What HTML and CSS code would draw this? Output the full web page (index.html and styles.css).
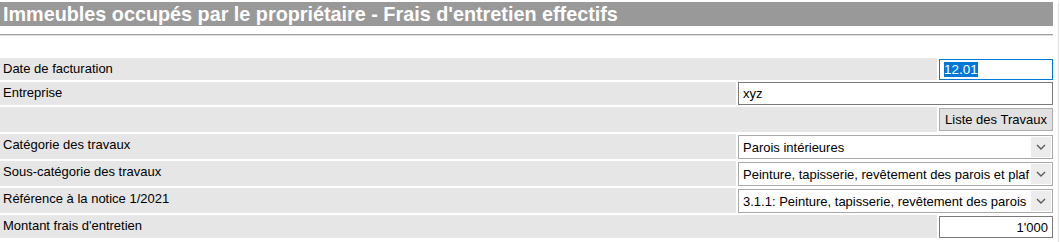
FILE: index.html
```html
<!DOCTYPE html>
<html>
<head>
    <title>Frais d'entretien effectifs</title>
    <link rel="stylesheet" href="styles.css">
</head>
<body>
  <div class="page">
    <h1 class="title">Immeubles occupés par le propriétaire - Frais d'entretien effectifs</h1>
    <div class="rule"></div>

    <form class="form">
      <div class="row row-date">
        <div class="label">Date de facturation</div>
        <div class="cell cell-short">
          <div class="field field-focus"><span class="sel">12.01</span></div>
        </div>
      </div>

      <div class="row row-text">
        <div class="label">Entreprise</div>
        <div class="cell cell-long">
          <input type="text" class="field" value="xyz">
        </div>
      </div>

      <div class="row row-tall">
        <div class="label"></div>
        <div class="cell cell-short">
          <button type="button" class="button">Liste des Travaux</button>
        </div>
      </div>

      <div class="row row-tall">
        <div class="label">Catégorie des travaux</div>
        <div class="cell cell-long">
          <div class="select">
            <span class="select-text">Parois intérieures</span>
            <span class="arrow"><svg width="10" height="6" viewBox="0 0 10 6"><path d="M1 1 L5 5 L9 1" fill="none" stroke="#5a5a5a" stroke-width="1.4"/></svg></span>
          </div>
        </div>
      </div>

      <div class="row row-tall">
        <div class="label">Sous-catégorie des travaux</div>
        <div class="cell cell-long">
          <div class="select">
            <span class="select-text">Peinture, tapisserie, revêtement des parois et plaf</span>
            <span class="arrow"><svg width="10" height="6" viewBox="0 0 10 6"><path d="M1 1 L5 5 L9 1" fill="none" stroke="#5a5a5a" stroke-width="1.4"/></svg></span>
          </div>
        </div>
      </div>

      <div class="row row-tall">
        <div class="label">Référence à la notice 1/2021</div>
        <div class="cell cell-long">
          <div class="select">
            <span class="select-text">3.1.1: Peinture, tapisserie, revêtement des parois</span>
            <span class="arrow"><svg width="10" height="6" viewBox="0 0 10 6"><path d="M1 1 L5 5 L9 1" fill="none" stroke="#5a5a5a" stroke-width="1.4"/></svg></span>
          </div>
        </div>
      </div>

      <div class="row row-amount">
        <div class="label">Montant frais d'entretien</div>
        <div class="cell cell-short">
          <input type="text" class="field field-number" value="1'000">
        </div>
      </div>
    </form>
  </div>
</body>
</html>
```

FILE: styles.css
```css
body {
    margin: 0;
    background-color: #fff;
    font-family: "Liberation Sans", Arial, sans-serif;
    font-size: 13px;
    color: #000;
}

.page {
    width: 1053px;
    min-height: 242px;
    padding-right: 5px;
    border-right: 1px solid #e2e2e2;
}

.title {
    margin: 2px 0 0 0;
    height: 24px;
    line-height: 24px;
    padding-left: 3px;
    background-color: #999999;
    color: #fff;
    font-size: 19.8px;
    font-weight: bold;
    white-space: nowrap;
}

.rule {
    margin-top: 8px;
    height: 1px;
    background-color: #a0a0a0;
    border-bottom: 1px solid #dedede;
}

.form {
    margin-top: 22px;
    display: flex;
    flex-direction: column;
    gap: 2px;
}

.row {
    display: flex;
}

.row-date { height: 22px; }
.row-text { height: 23px; }
.row-tall { height: 25px; }
.row-amount { height: 23px; }

.label {
    flex: 1;
    background-color: #e6e6e6;
    padding: 3px 0 0 3px;
    line-height: 15px;
}

.cell {
    display: flex;
    background-color: #fff;
    padding-left: 2px;
}

.cell-short { width: 114px; }
.cell-long { width: 315px; }

.field {
    box-sizing: border-box;
    width: 100%;
    height: 100%;
    margin: 0;
    border: 1px solid #7a7a7a;
    padding: 0 4px;
    font-family: "Liberation Sans", Arial, sans-serif;
    font-size: 13px;
    color: #000;
    background: #fff;
    outline: none;
}

.field-focus {
    display: flex;
    align-items: center;
    border-color: #0078d7;
    height: 21px;
    margin-top: 1px;
    font-size: 13.5px;
}

.sel {
    background-color: #0078d7;
    color: #fff;
    line-height: 15px;
}

.field-number {
    text-align: right;
    height: 22px;
    margin-top: 1px;
}

.button {
    box-sizing: border-box;
    width: 100%;
    height: 23px;
    margin-top: 1px;
    padding: 0;
    border: 1px solid #adadad;
    background-color: #e1e1e1;
    font-family: "Liberation Sans", Arial, sans-serif;
    font-size: 13px;
    color: #000;
}

.select {
    box-sizing: border-box;
    display: flex;
    align-items: center;
    width: 100%;
    height: 24px;
    margin-top: 1px;
    border: 1px solid #a9a9a9;
    background: #fff;
    overflow: hidden;
}

.select-text {
    flex: 1;
    padding-left: 4px;
    white-space: nowrap;
}

.arrow {
    display: flex;
    align-items: center;
    justify-content: center;
    width: 20px;
    height: 20px;
    margin-right: 1px;
    background-color: #ececec;
}
```
